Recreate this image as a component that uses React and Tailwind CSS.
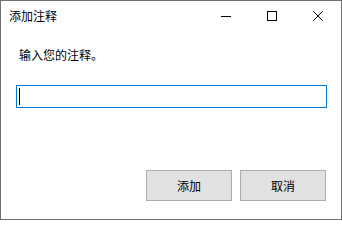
import React from "react";

export default function App() {
  return (
    <div className="w-[342px] h-[220px] bg-white border border-[#707070] flex flex-col text-black font-['Microsoft_YaHei','Noto_Sans_CJK_SC',sans-serif]">
      <div className="h-[29px] flex items-center shrink-0">
        <span className="pl-[8px] text-[12px] leading-[16px]">添加注释</span>
        <div className="ml-auto flex h-full">
          <div className="w-[46px] h-full flex items-center justify-center">
            <svg width="10" height="10" viewBox="0 0 10 10" shapeRendering="crispEdges">
              <rect x="0" y="5" width="10" height="1" fill="#000" />
            </svg>
          </div>
          <div className="w-[46px] h-full flex items-center justify-center">
            <svg width="10" height="10" viewBox="0 0 10 10" shapeRendering="crispEdges">
              <rect x="0.5" y="0.5" width="9" height="9" fill="none" stroke="#000" strokeWidth="1" />
            </svg>
          </div>
          <div className="w-[46px] h-full flex items-center justify-center">
            <svg width="10" height="10" viewBox="0 0 10 10">
              <path d="M0.3 0.3 L9.7 9.7 M9.7 0.3 L0.3 9.7" stroke="#000" strokeWidth="1" fill="none" />
            </svg>
          </div>
        </div>
      </div>
      <div className="flex-1 flex flex-col px-[15px]">
        <div className="mt-[17px] ml-[3px] text-[12px] leading-[16px]">输入您的注释。</div>
        <div className="mt-[22px] w-[311px] h-[23px] border border-[#0078d7] flex items-center pl-[2px]">
          <span className="block w-px h-[17px] bg-black" />
        </div>
        <div className="flex-1" />
        <div className="flex justify-end gap-[8px] mb-[18px]">
          <button className="w-[86px] h-[31px] bg-[#e1e1e1] border border-[#adadad] text-[12px] leading-[16px] flex items-center justify-center">添加</button>
          <button className="w-[86px] h-[31px] bg-[#e1e1e1] border border-[#adadad] text-[12px] leading-[16px] flex items-center justify-center">取消</button>
        </div>
      </div>
    </div>
  );
}
